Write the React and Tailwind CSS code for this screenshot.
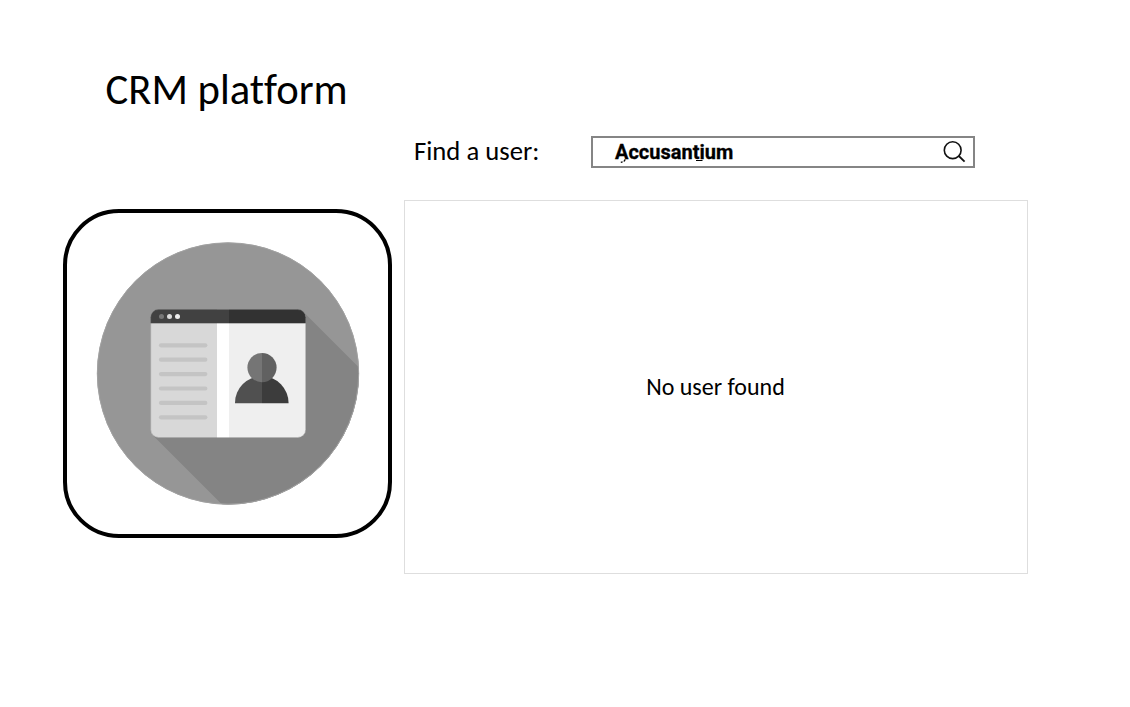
import React from "react";

const lineRows = [345, 359.4, 373.8, 388.2, 402.6, 417];

function CrmIllustration() {
  return (
    <svg className="h-[264px] w-[264px]" viewBox="96 242 264 264">
      <defs>
        <clipPath id="disc">
          <circle cx="228" cy="373.5" r="131" />
        </clipPath>
        <clipPath id="window">
          <rect x="150.5" y="309.3" width="155.3" height="128.4" rx="8" />
        </clipPath>
      </defs>
      <circle cx="228" cy="373.5" r="131" fill="#969696" />
      <path d="M303 311.5L433 441.5V567H284.5L153 435.5Z" fill="#848484" clipPath="url(#disc)" />
      <circle cx="228" cy="373.5" r="130.7" fill="none" stroke="#a2a2a2" strokeWidth="1" />
      <g clipPath="url(#window)">
        <rect x="150" y="309" width="67" height="129" fill="#d8d8d8" />
        <rect x="217" y="309" width="12" height="129" fill="#fff" />
        <rect x="229" y="309" width="77" height="129" fill="#efefef" />
        <rect x="150" y="309" width="79" height="14.3" fill="#414141" />
        <rect x="229" y="309" width="77" height="14.3" fill="#323232" />
      </g>
      <rect x="150.7" y="309.5" width="155" height="128" rx="8" fill="none" stroke="#777" strokeOpacity=".5" strokeWidth=".7" />
      <circle cx="161.5" cy="316.5" r="2.5" fill="#777" />
      <circle cx="169.5" cy="316.5" r="2.5" fill="#ddd" />
      <circle cx="177.5" cy="316.5" r="2.5" fill="#eee" />
      {lineRows.map((y) => (
        <path key={y} d={`M161 ${y + 0.3}H205.3`} stroke="#c4c4c4" strokeWidth="4.2" strokeLinecap="round" />
      ))}
      <path d="M235 403.2a26.8 26.8 0 0 1 27-27v27z" fill="#505050" />
      <path d="M262 376.2a26.8 26.8 0 0 1 26.6 27H262z" fill="#3c3c3c" />
      <path d="M262 353a14.6 14.6 0 0 0 0 29.2z" fill="#757575" />
      <path d="M262 353a14.6 14.6 0 0 1 0 29.2z" fill="#616161" />
    </svg>
  );
}

function SearchField() {
  return (
    <div className="flex h-8 w-[384px] items-center justify-between border-2 border-[#858585] pr-[7px] pl-[22px]">
      <span className="relative font-[Roboto,sans-serif] text-[20px] leading-none font-bold [-webkit-text-stroke:0.3px_#000]">
        Accusantium
        <svg className="absolute top-0 left-0 h-6 w-[118px]" viewBox="615 142 118 24">
          <path d="M625 159.2q0 1.6-1.3 2.1M622.6 161.9l-1.8.4" fill="none" stroke="#000" strokeWidth="1.3" />
          <path d="M696 160.5h6.5" stroke="#000" strokeWidth="1" />
        </svg>
      </span>
      <svg className="h-6 w-6" viewBox="0 0 24 24" fill="none" stroke="#111">
        <circle cx="10.7" cy="10.2" r="8.4" strokeWidth="1.6" />
        <path d="M16.8 16l5.8 5.7" strokeWidth="1.8" />
      </svg>
    </div>
  );
}

export default function App() {
  return (
    <div className="h-[707px] w-[1130px] overflow-hidden bg-white pt-[63px] pl-[63px] font-[Carlito,Calibri,sans-serif] text-black [font-variant-ligatures:none]">
      <h1 className="h-[73px] pl-[42.5px] text-[42.67px] leading-[52px]">CRM platform</h1>
      <div className="flex h-16 items-start pl-[351px]">
        <label className="w-[177px] text-[26.67px] leading-[30px]">Find a user:</label>
        <SearchField />
      </div>
      <div className="flex items-start gap-3">
        <div className="mt-[9px] flex h-[329px] w-[329px] shrink-0 items-center justify-center rounded-[56px] border-4 border-black">
          <CrmIllustration />
        </div>
        <div className="flex h-[374px] w-[624px] items-center justify-center border border-[#dedede] pr-px pb-px text-[24px]">
          No user found
        </div>
      </div>
    </div>
  );
}
